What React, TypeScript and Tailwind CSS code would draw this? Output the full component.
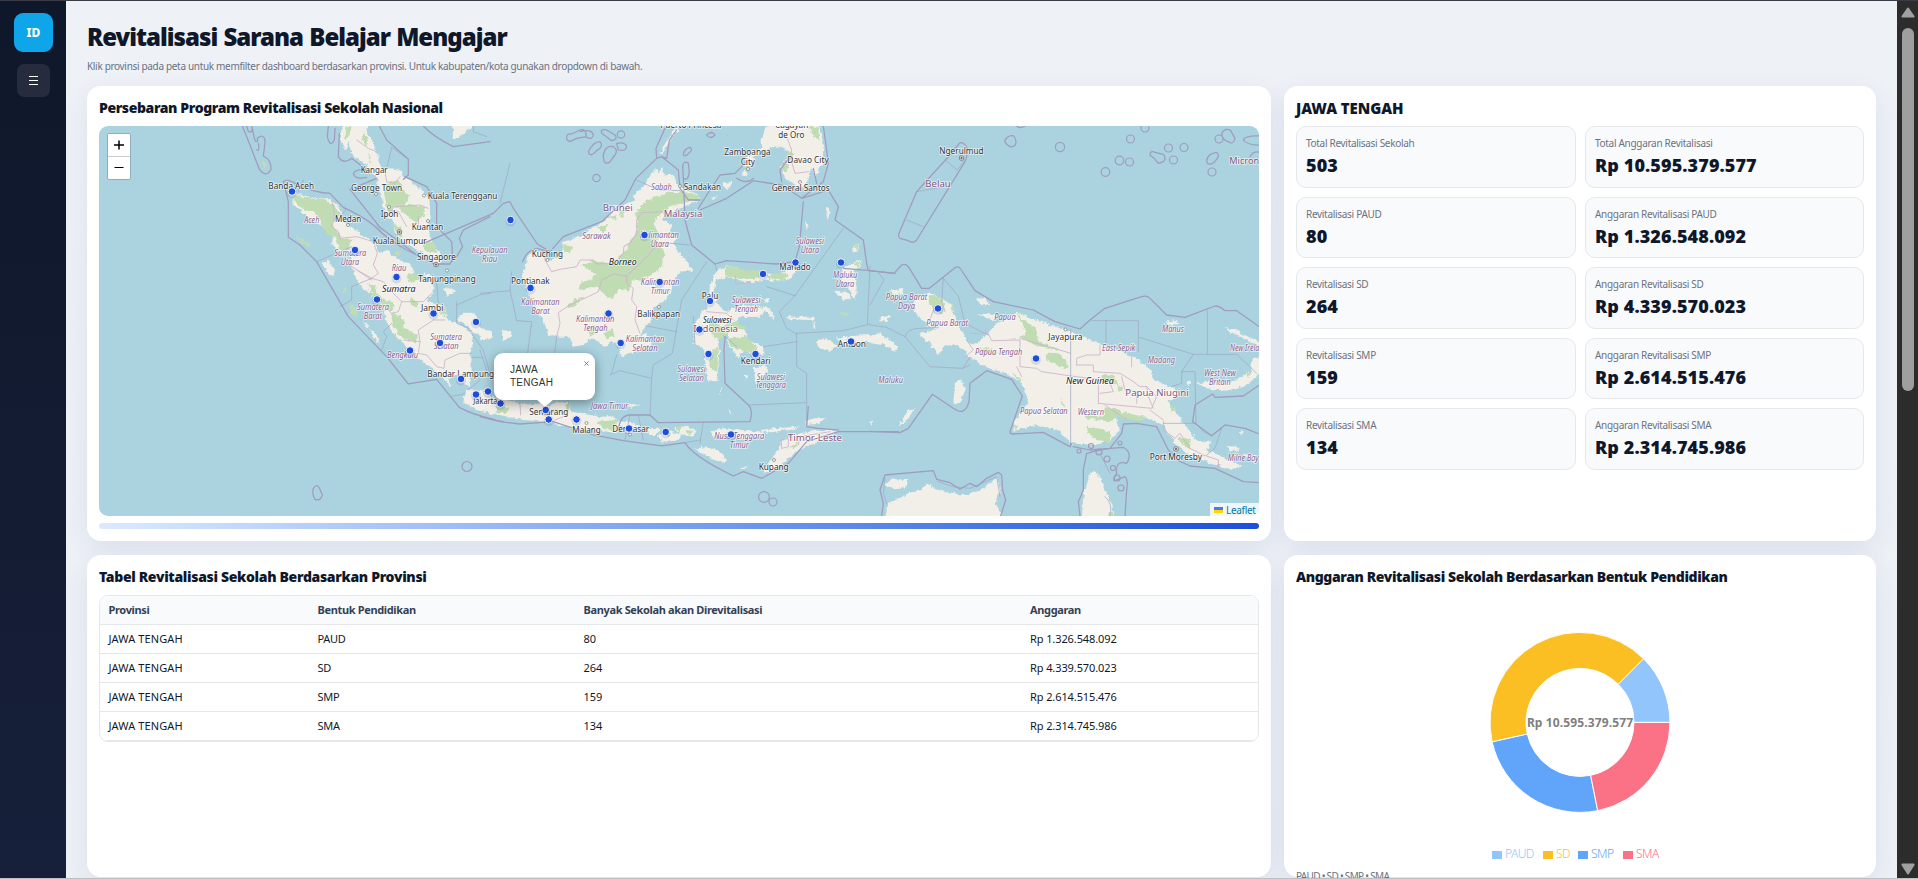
import React from "react";

type Label = [number, number, number, string];

const LAND_W = [
  "M755 10L752 60 765 92 775 65 785 100 808 120 830 135 845 160 862 172 862 195 875 225 880 260 895 290 908 300 915 340 940 365 965 382 1000 400 1040 432 1056 428 1050 395 1028 365 1015 340 1022 290 1018 240 1000 215 980 198 955 178 940 168 925 148 900 145 885 155 870 135 862 105 850 65 835 45 830 10Z",
  "M1090 10L1088 58 1110 48 1145 25 1150 10Z",
  "M602 216L625 222 680 235 715 235 740 255 755 272 760 305 790 325 820 348 855 370 865 398 890 392 915 410 940 425 965 438 970 460 1000 480 1035 498 1030 520 1010 540 1045 555 1068 560 1075 600 1105 610 1125 625 1145 640 1150 670 1140 690 1142 740 1140 800 1120 790 1100 765 1075 775 1082 802 1060 775 1035 752 1000 725 965 700 940 670 910 640 888 600 885 575 860 540 845 520 825 510 800 480 790 450 780 410 745 392 725 375 730 345 690 315 650 290 612 255Z",
  "M695 428L715 422 735 450 730 468 710 455Z",
  "M1100 600L1115 582 1150 578 1160 600 1165 622 1195 630 1185 652 1150 640 1135 618Z",
  "M818 600L835 618 830 622Z", "M840 625L860 645 866 668 848 650Z",
  "M1062 510L1075 500 1095 515 1070 530Z",
  "M1000 455L1015 465 1035 470 1030 478 1005 470Z",
];
const GREEN_W = [
  "M605 225L680 237 705 238 735 262 752 280 735 300 728 320 745 335 752 355 785 360 778 392 748 390 738 350 712 345 690 305 672 275 640 268 615 248Z",
  "M770 18L785 20 775 50 765 60Z", "M820 30L832 60 828 80 818 60Z", "M835 90L845 135 838 130Z",
  "M890 190L925 180 945 215 960 225 940 262 915 260 900 290 888 250 882 215Z",
  "M925 260L960 252 1005 262 1000 290 975 312 960 290 935 275Z",
  "M905 305L930 320 940 350 922 345Z", "M1000 365L1030 362 1045 400 1020 395 1002 385Z",
  "M620 350L660 372 658 380 628 362Z", "M775 550L798 560 805 592 782 578Z",
  "M835 490L860 495 858 515 880 540 908 545 912 570 895 570 870 545 845 520Z",
  "M905 580L935 590 945 625 980 645 978 668 955 660 930 650 905 610Z",
  "M955 460L985 462 990 480 965 488 950 475Z", "M960 535L985 548 985 565 962 552Z",
  "M1050 555L1068 562 1068 590 1048 580Z", "M760 505L770 500 762 530Z", "M950 770L968 778 955 778Z", "M518 120L530 135 525 148 515 138Z", "M915 395L930 395 930 408 917 405Z",
];
const LINES_W = [
  "M457 18L480 75 508 148Q530 175 543 148Q545 120 520 108Q525 75 525 60Q520 40 502 55Q505 70 495 62Q490 40 485 18",
  "M505 70Q510 95 500 90M485 30Q490 38 475 35L470 18",
  "M580 185Q592 175 615 190Q670 218 720 220L760 262Q820 290 850 315Q895 360 950 390Q1010 420 1035 432L1080 432Q1090 415 1085 365L1040 320 1040 250 1010 200 945 170",
  "M580 185L595 245 595 352 630 375 680 425 775 590 890 710 955 792 1040 778 1108 862Q1150 885 1210 897",
  "M868 18L890 60 955 118 955 165 940 178",
  "M715 18L712 50Q720 85 733 60L735 25M748 40L745 110Q760 135 785 115L830 150Q800 145 790 160Q795 180 830 172",
  "M780 208L870 322 940 375 1000 420M780 208L860 175",
  "M1200 290L1120 330 1108 355 1118 380 1100 410 1085 425",
  "M1000 18Q1030 50 1090 80L1200 65",
  "M1200 897L1240 905",
  "M670 1105Q682 1088 690 1108L697 1125Q692 1145 675 1138Q665 1125 670 1105Z",
];
const THIN_W = [
  "M905 82L890 145M905 82L955 118M640 180L625 215M770 265L755 285M680 425L785 380M750 560L785 540 785 500 845 475M875 690L890 650 880 635 905 610M860 315L880 345M1040 490L1045 555M1100 545L1100 610 1130 620 1180 690 1200 760M1100 555L1170 525 1200 520M1145 712L1180 712M1080 830L1120 822 1170 780M1150 18L1150 35 1190 50",
];
const PROV_W = [
  "M725 240L735 290 725 320 745 335 750 355 800 350 850 365 862 400 850 435 865 460 845 475 810 455 785 440M845 475L880 485 895 505 935 545 1000 545 1025 520M935 545L925 575 905 580 888 565M940 660L990 665 985 630 1030 600 1065 600M990 665L985 700 1010 705 1040 740 1062 745 1065 720 1110 700 1145 700M800 450L845 480M920 260L990 255 1015 265M885 155L890 185 915 190 930 170M800 60L835 85 860 95M895 270L925 275 950 320M985 290L985 320 1015 320",
];

const LAND_M = [
  "M545 140L555 165 580 165 590 190 615 210 650 222 660 240 635 250 605 262 580 275 555 285 545 300 578 315 568 335 590 350 578 370 600 400 640 450 600 455 580 480 575 510 550 545 520 560 515 600 495 618 480 650 500 640 515 675 490 690 450 700 425 712 415 680 395 665 375 680 350 662 330 655 310 675 280 680 270 650 240 650 205 645 190 600 165 570 150 530 130 480 130 450 150 400 180 395 200 425 245 410 250 365 300 350 340 320 380 300 400 260 430 255 465 240 460 225 490 200 515 160 530 145 540 160Z",
  "M540 105L545 88 562 60 590 15 605 15 572 58 548 100Z",
  "M845 60L860 20 930 10 1015 10 1030 70 1028 130 1008 170 998 150 988 155 985 185 965 205 915 175 900 140 930 100 905 80 885 80 850 92 822 110 815 135 790 140 800 110 845 82Z",
  "M790 155L808 158 800 172 785 165Z", "M730 190L758 185 750 200 735 205Z", "M690 235L715 225 700 240Z",
  "M682 560L690 500 705 460 740 435 790 450 840 460 890 462 930 450 945 430 952 448 925 480 860 482 800 487 740 472 708 480 700 520 712 552 740 575 790 552 835 560 855 572 840 590 780 592 762 605 795 635 805 660 850 680 850 705 810 700 790 690 775 720 760 690 745 675 742 640 725 620 712 650 718 700 712 780 682 782 678 740 668 680 640 672 642 620 662 580Z",
  "M820 745L850 735 865 750 830 795Z", "M790 765L802 765 798 780Z", "M720 790L724 830 720 815Z",
  "M840 560L870 565 885 600 860 575Z", "M840 535L870 535 865 550Z",
  "M918 588L950 590 1000 590 1003 600 925 598Z", "M1002 600L1006 625 1000 622Z",
  "M1115 430L1142 420 1138 445 1120 452 1130 500 1128 540 1112 520 1105 490 1085 480 1088 445Z", "M1120 378L1140 368 1135 390 1120 395Z", "M1060 515L1095 515 1115 535 1090 540Z", "M1038 262L1050 270 1042 305Z", "M975 305L985 315 980 325Z",
  "M1008 665L1040 655 1070 675 1050 692 1018 685Z", "M1070 655L1110 648 1170 645 1215 650 1215 672 1155 665 1120 680 1085 672Z",
  "M-45 810L20 812 45 838 90 845 120 850 160 856 185 848 200 862 230 848 265 845 275 875 330 885 370 890 400 888 418 915 412 940 350 930 280 925 200 905 130 900 60 885 0 872 -50 850Z",
  "M412 905L450 905 478 918 455 945 435 935Z", "M500 930L540 925 530 945 505 945Z", "M530 950L560 930 605 945 590 962 545 965Z",
  "M580 925L620 920 650 930 640 950 600 942Z", "M690 935L730 925 790 930 850 935 850 950 800 955 740 948 700 950Z",
  "M840 930L880 925 960 920 930 930 860 938Z", "M975 905L1000 895 1040 895 1010 912 980 915Z",
  "M645 985L690 982 725 1000 742 1025 710 1022 660 998Z",
  "M860 1045L885 1000 910 960 960 940 1020 930 1080 930 1050 950 980 980 940 1000 900 1040 850 1060Z",
  "M0 632L35 635 38 655 5 662Z", "M65 632L90 630 92 655 68 662Z", "M440 852L480 855 470 860 445 860Z", "M745 870L758 880 750 880Z", "M780 1042L800 1038 795 1045Z",
];
const GREEN_M = [
  "M470 280L480 262 500 242 560 218 605 215 655 225 655 240 610 248 575 258 545 278 520 310 535 340 530 370 555 395 545 440 520 462 480 482 462 478 445 512 420 505 395 537 370 520 350 500 300 512 298 490 335 478 350 462 300 435 340 422 400 432 440 390 440 372 470 340Z",
  "M285 535L312 530 280 562 262 560Z", "M370 640L395 625 405 650 380 655Z", "M325 620L345 615 350 640 330 650Z",
  "M385 290L410 288 405 300Z", "M350 320L385 315 370 340Z", "M250 372L280 378 270 400 250 390Z", "M412 270L440 270 425 292Z",
  "M735 435L775 445 845 458 830 475 790 478 735 470Z", "M745 655L800 650 830 680 820 700 780 690 748 675Z", "M870 460L925 460 915 480 870 475Z",
  "M690 600L725 620 770 600 800 630 760 630 715 660 690 640Z", "M685 700L715 680 712 760 690 740Z",
  "M1120 378L1140 370 1132 392Z", "M1120 430L1140 425 1135 445Z", "M1080 575L1112 580 1100 588 1078 584Z",
  "M985 20L1015 20 1018 60 1000 50Z", "M925 90L940 100 935 130 920 115Z", "M905 130L930 130 920 155 905 150Z",
  "M210 870L235 865 225 880Z", "M45 860L90 862 80 880 50 878Z", "M255 850L275 855 260 875Z", "M350 905L410 900 410 935 370 925Z", "M585 920L605 922 600 938Z", "M615 930L640 932 630 945Z", "M550 940L575 942 565 950Z", "M920 985L960 965 945 985Z",
];
const LINES_M = [
  "M-170 370L-30 310 40 280 70 250 90 245 100 265 172 372 210 395 250 350 365 305 435 240 468 175 530 115 545 110 595 150 600 205 625 240 660 240M530 115L528 85 555 25",
  "M545 110L560 115 568 60 590 30M610 170L615 300 635 375 705 432 740 422 890 432 945 425 958 380 970 245M660 270L740 235 820 182 905 195 965 235 1030 185 1045 130 1030 18",
  "M965 235L1045 210 1075 260 1065 300 1150 360 1160 430 1165 452 1245 460",
  "M655 265L690 210 720 165 765 160 800 125",
  "M0 890L60 905 120 912 220 905 340 945 430 962 545 978 615 968Q640 1010 760 1068L790 1055 845 1075 925 1030 980 965 1075 935 1170 935 1255 935",
  "M980 920L985 860 M980 920Q1000 925 1075 930M415 930Q420 885 450 885L510 885 535 908 810 905Q820 870 805 855L735 790 732 690 735 650",
  "M128 425Q140 390 172 385L200 395M260 55Q258 40 275 42L300 30Q320 25 318 50L290 55 270 65Q260 62 260 55ZM300 35Q335 25 340 45Q338 60 320 52M365 40Q360 25 380 30L405 45Q415 60 395 62ZM325 95Q340 65 360 65Q372 80 350 92Q330 115 325 95ZM370 105Q375 75 400 80Q415 90 405 105L390 125Q370 140 370 105ZM410 70Q435 65 440 80Q438 95 415 90ZM610 105Q612 85 630 82Q640 90 628 98Q615 112 610 105ZM608 140Q610 120 625 130L628 155Q625 185 610 175Z",
  "M770 175Q800 195 820 175M905 185L900 150 930 110M1000 145L1010 190M680 45Q695 30 705 45Q690 60 680 45",
];
const THIN_M = [
  "M60 250L90 130M0 520L90 512M0 690L20 750M95 455L90 510 110 602 155 605 135 760M230 650L215 770M265 845L230 770M410 705L395 760 390 765M390 765L420 752 515 775 510 885M515 775L520 735 577 700 605 540 680 425M470 180L535 210 600 212M500 618L590 635M575 370L628 375M640 590L645 672M705 432L710 450M735 650L770 680M850 680L950 665M950 640L950 740 980 760 980 920M950 640L1090 632 1170 612M945 527L898 575 920 625 950 642M945 527L1090 325M860 500L945 527M1170 440L1162 612M808 855L980 848M660 970L670 905M475 885L490 960M450 885L435 960M615 968L660 960",
];
const PROV_M = [
  "M195 420L215 455 240 448 290 440 300 420 340 420 350 432 400 430 430 400 432 378 450 370 470 340 470 300 485 278 545 275 560 290M355 515L325 530 270 555 235 578 240 610 230 650M355 515L365 480 400 462 440 468 440 490 460 505 455 540 470 560 465 600 480 640M440 468L480 430 510 400 535 370 575 370M680 575L740 580 760 600M765 470L768 492 808 488M860 462L870 478M905 130L935 125 945 160 985 155M920 50L935 90 930 120M120 850L122 885M265 850L262 885 225 900M200 865L215 900M905 960L925 955 925 980 905 985ZM955 975L960 950 1050 935",
];

const LAND_E = [
  "M60 510L95 508 105 520 75 525Z", "M30 590L60 588 50 605 28 600Z",
  "M132 540L165 522 185 520 225 542 245 555 255 590 268 625 285 650 295 670 320 670 355 638 380 610 440 578 500 600 560 622 610 640 690 672 740 690 790 710 840 745 850 780 900 800 935 820 895 845 915 872 945 915 985 965 1025 965 1010 990 1080 1020 1120 1040 1080 1048 1030 1030 960 1010 915 970 880 915 830 895 770 890 735 890 750 930 722 960 680 975 600 970 565 930 500 915 430 932 435 900 475 850 455 790 420 765 350 742 300 712 280 690 250 672 222 680 205 708 182 672 145 642 205 628 170 612 135 580Z",
  "M45 1195L55 1150 115 1120 155 1110 170 1090 200 1108 240 1120 290 1125 330 1112 382 1075 390 1115 375 1145 398 1195Z",
  "M45 1095L65 1078 115 1080 105 1105 70 1108Z",
  "M635 1195L640 1130 660 1060 680 1052 700 1098 725 1150 735 1195Z",
  "M978 790L1020 785 1050 790 1095 780 1140 755 1145 718 1175 712 1175 755 1130 795 1070 812 1010 805Z",
  "M-5 650L30 640 60 660 82 680 75 695 40 672 0 670Z", "M255 790L270 775 285 810 270 850 250 850Z", "M85 920L115 870 135 865 110 900Z",
  "M320 580L390 585 365 600Z", "M315 535L345 535 358 556 335 555Z", "M885 605L920 600 928 612 890 614Z",
  "M1062 625L1090 628 1175 670 1165 678 1090 640Z", "M1070 978L1100 980 1108 992 1080 992Z", "M950 780L965 785 955 795Z", "M1110 932L1122 935 1112 945Z", "M1115 1000L1165 1012 1150 1025Z", "M0 905L8 900 5 915Z",
];
const GREEN_E = [
  "M175 525L205 530 225 550 218 580 195 575 180 550Z", "M240 550L255 570 245 575Z",
  "M440 578L462 600 500 630 505 665 575 690 500 678 455 655 410 660 450 652 470 640 455 605Z",
  "M525 700L560 698 588 720 595 745 570 740 530 720Z", "M330 685L360 685 385 700 370 708 335 695Z", "M418 752L450 775 460 795 440 775Z",
  "M695 765L730 768 745 790 720 795 695 785Z", "M640 885L700 890 740 870 795 885 830 890 815 905 740 890 720 905 650 895Z",
  "M705 862L745 868 742 880 700 890Z", "M650 920L700 928 725 945 715 965 680 960 652 940Z", "M925 950L962 958 960 988 930 970Z", "M900 850L915 865 905 880Z", "M575 835L583 860 572 850Z",
  "M430 920L445 915 440 930Z", "M715 1175L730 1178 730 1195 715 1195Z", "M1125 755L1142 760 1135 775Z", "M740 790L760 810 745 815Z",
];
const LINES_E = [
  "M-80 445L0 452 72 460 95 435Q105 430 115 440L155 505 178 505 255 443Q265 437 272 447L315 512 370 545 490 570 555 605 630 627 660 600 705 565 815 530Q830 525 840 535L890 585 945 592 1035 558Q1050 558 1065 572L1100 572 1175 625",
  "M0 934L90 938 115 925 187 823 250 865Q285 890 297 845L300 790 350 752 425 778 457 828 420 935Q420 942 430 942L520 937 600 980 605 970",
  "M610 980L660 990 720 985 755 940 760 912 800 910 860 920 895 990 925 1022 960 1038 1035 1045 1120 1085 1175 1088",
  "M1175 945L1125 925 1065 915 1025 947 968 905 975 855 1028 822 1035 832 1120 828 1175 790",
  "M140 215L240 105 268 70Q280 62 292 85Q290 120 285 125L140 360Q130 372 115 362L90 355Q83 350 87 340Z",
  "M35 1188L40 1150 30 1110 45 1065 190 1052 200 1078 240 1088 270 1108 300 1090 320 1100 350 1075 385 1057 395 1065 398 1110 407 1140 392 1188",
  "M630 1188L625 1145 640 1110 640 1050 650 1000Q700 985 760 982Q790 1000 770 1030Q735 1020 740 1060Q725 1085 735 1082L765 1070Q775 1080 770 1110L765 1188",
  "M404 65Q410 45 430 47Q442 60 436 75Q420 90 404 65ZM840 105Q840 90 855 97L880 103Q890 115 880 125L865 130Q855 115 840 105ZM1010 120Q1015 100 1040 97Q1050 105 1040 118Q1025 138 1012 130ZM1055 40Q1065 22 1082 32L1095 55Q1090 75 1075 65Q1055 60 1055 40ZM1120 60Q1125 45 1175 48M1175 76Q1130 75 1120 60M1140 110Q1150 90 1175 98M440 18Q450 28 465 18",
];
const THIN_E = [
  "M225 120L262 150 285 118M140 215L225 200M110 300L160 320M220 475L215 545M220 475L265 528 285 610 355 645M0 555L42 480 25 458M0 615L50 622 105 650 180 740 278 745 300 712M105 650Q110 625 150 625L205 622M602 628L602 980M708 600L708 675M665 602L805 602 805 695M808 652L970 703 935 755 975 755 978 910 880 910M970 703L1100 703 1160 760M1012 570L1012 703M935 755L935 790 905 800M978 910L1000 935 1025 947 1055 925 1035 985 1010 1005M278 745L300 735M45 1075L40 1120 50 1150M205 1085L250 1100 300 1105 380 1070 390 1130M705 1130Q730 1150 720 1188M690 1000L720 1060",
];
const PROV_E = [
  "M300 640L355 642 365 662 450 660 450 740 500 745 515 755 602 768 685 778M450 655L602 700M620 735L620 715 650 705 690 705 690 675M620 735L670 735 670 755 750 760 790 785 810 800 830 800 860 830 845 865 685 850 685 778M345 640L350 620M290 660L310 690 280 715M180 600L195 555M215 545L225 575M440 740L455 770M705 855L770 900M755 770L765 810 800 815 800 850M830 800L835 830 850 865M880 905L880 930 915 955 930 940 960 985 1000 1005 1045 1020 1045 1045M690 820L730 815 720 790M840 870L880 900M785 710L785 740",
];

const CITY_W: Label[] = [
  [535, 672, 206, "Banda Aceh"], [812, 893, 160, "Kangar"], [783, 936, 213, "George Town"], [1013, 1222, 236, "Kuala Terengganu"], [872, 925, 292, "Ipoh"],
  [735, 814, 307, "Medan"], [965, 1060, 331, "Kuantan"], [848, 1010, 371, "Kuala Lumpur"], [981, 1098, 420, "Singapore"], [985, 1157, 485, "Tanjungpinang"],
  [993, 1060, 574, "Jambi"], [1012, 1212, 770, "Bandar Lampung"], [1150, 1222, 851, "Jakarta"],
];
const PROVN_W: Label[] = [
  [643, 688, 309, "Aceh"], [733, 829, 408, "Sumatera"], [752, 808, 435, "Utara"], [905, 949, 454, "Riau"], [801, 897, 570, "Sumatera"], [821, 876, 597, "Barat"],
  [1021, 1116, 660, "Sumatera"], [1031, 1106, 687, "Selatan"], [891, 984, 714, "Bengkulu"], [1145, 1253, 400, "Kepulauan"], [1176, 1222, 427, "Riau"],
];
const CITY_M: Label[] = [
  [541, 724, 25, "Puerto Princesa"], [885, 985, 25, "Cagayan"], [895, 973, 55, "de Oro"], [733, 872, 106, "Zamboanga"], [782, 825, 136, "City"], [922, 1046, 129, "Davao City"],
  [875, 1049, 213, "General Santos"], [611, 723, 209, "Sandakan"], [155, 249, 411, "Kuching"], [93, 209, 492, "Pontianak"], [472, 600, 591, "Balikpapan"],
  [898, 992, 451, "Manado"], [665, 715, 536, "Palu"], [782, 872, 731, "Kendari"], [1073, 1158, 680, "Ambon"], [148, 265, 886, "Semarang"], [277, 362, 938, "Malang"],
  [397, 507, 935, "Denpasar"], [836, 926, 1051, "Kupang"],
];
const PROVN_M: Label[] = [
  [514, 575, 209, "Sabah"], [307, 392, 356, "Sarawak"], [480, 597, 353, "Kalimantan"], [512, 567, 380, "Utara"], [947, 1032, 371, "Sulawesi"], [962, 1018, 398, "Utara"],
  [123, 239, 556, "Kalimantan"], [154, 209, 583, "Barat"], [482, 598, 496, "Kalimantan"], [512, 569, 523, "Timur"], [288, 403, 607, "Kalimantan"], [310, 383, 634, "Tengah"],
  [437, 553, 667, "Kalimantan"], [457, 533, 693, "Selatan"], [755, 841, 548, "Sulawesi"], [763, 834, 575, "Tengah"], [1059, 1132, 475, "Maluku"], [1067, 1123, 502, "Utara"],
  [592, 677, 756, "Sulawesi"], [597, 672, 783, "Selatan"], [830, 915, 779, "Sulawesi"], [827, 918, 805, "Tenggara"], [333, 445, 867, "Jawa Timur"], [703, 853, 958, "Nusa Tenggara"], [749, 806, 984, "Timur"],
];
const CITY_E: Label[] = [[208, 341, 101, "Ngerulmud"], [535, 637, 661, "Jayapura"], [839, 996, 1020, "Port Moresby"]];
const PROVN_E: Label[] = [
  [47, 172, 539, "Papua Barat"], [84, 135, 566, "Daya"], [169, 294, 619, "Papua Barat"], [373, 437, 599, "Papua"], [315, 457, 705, "Papua Tengah"], [25, 99, 790, "Maluku"],
  [450, 593, 883, "Papua Selatan"], [623, 702, 885, "Western"], [696, 796, 692, "East Sepik"], [833, 915, 729, "Madang"], [876, 942, 636, "Manus"], [1080, 1192, 692, "New Ireland"],
  [1002, 1098, 767, "West New"], [1017, 1082, 794, "Britain"], [1073, 1166, 1022, "Milne Bay"],
];

function Names({ items, kind }: { items: Label[]; kind: "city" | "prov" | "country" | "island" }) {
  const tone = {
    city: "fill-[#333333] text-[26px]",
    prov: "fill-[#8a5f8e] text-[24.5px] italic",
    country: "fill-[#81567f] text-[28px]",
    island: "fill-[#222222] text-[26px] italic",
  }[kind];
  return (
    <g className={tone} stroke="#ffffff" strokeOpacity="0.7" strokeWidth="5" strokeLinejoin="round" paintOrder="stroke">
      {items.map(([x1, x2, y, t], i) => (
        <text key={i} x={x1} y={y} textLength={x2 - x1} lengthAdjust="spacingAndGlyphs">{t}</text>
      ))}
    </g>
  );
}

function Region({ x, y, land, green, prov, thin, lines }: { x: number; y: number; land: string[]; green: string[]; prov: string[]; thin: string[]; lines: string[] }) {
  return (
    <g transform={`translate(${x} ${y}) scale(.33333)`} strokeLinejoin="round" strokeLinecap="round">
      <path d={land.join("")} fill="#f2efe9" filter="url(#coast)" />
      <path d={green.join("")} fill="#c0dcb2" filter="url(#coast)" />
      <path d={prov.join("")} fill="none" stroke="#cdb3cb" strokeWidth="2.6" />
      <path d={thin.join("")} fill="none" stroke="#9fa9c4" strokeWidth="2.2" />
      <path d={lines.join("")} fill="none" stroke="#a09cbd" strokeWidth="3.8" />
    </g>
  );
}

const MARKERS: [number, number][] = [
  [193, 65.5], [256, 124], [297.5, 151], [278, 173.5], [334.5, 187.5], [377, 196], [341, 217], [311, 224.5], [362, 253], [377, 268.5], [389, 265.5], [401.5, 277.5],
  [411.5, 94], [545.5, 109], [431.5, 162], [560.7, 156], [509.5, 187.5], [521.7, 217], [696.5, 136.5], [742, 136.5], [664, 148], [611, 175], [600.5, 203.5],
  [609.5, 228], [656.5, 228], [752, 215.5], [446.7, 284], [449.7, 293.5], [477.5, 293.5], [530, 302.5], [566.7, 306], [632, 308.5], [839, 182.5], [937, 232.5],
];
const ATOLLS: [number, number, number][] = [
  [961, 21, 4.6], [1031.5, 13, 4], [1046, 2, 4], [1069.5, 22, 4], [1085, 21.5, 4], [1074.5, 34, 4], [1020.5, 34.5, 4.3], [1030.5, 36, 4], [1006.5, 46, 4.3], [1113, 46, 4],
  [1120, 13, 4], [368, 340.5, 5], [497.5, 52, 3.7], [522, 8.5, 3.7], [665, 371, 5.4], [674, 376, 4], [980, 325, 2], [992, 320, 2.5], [1021, 317, 2], [1014, 342, 2.5], [1018, 352, 3], [1022, 362, 3], [1008, 333, 3], [1000, 326, 3],
];

function MapCanvas() {
  return (
    <svg viewBox="0 0 1160 390" className="block h-[390px] w-[1160px] bg-[#aad3df] font-['Noto_Sans',sans-serif]">
      <defs>
        <filter id="coast" x="-5%" y="-5%" width="110%" height="110%">
          <feTurbulence type="fractalNoise" baseFrequency="0.08" numOctaves="3" seed="4" result="n" />
          <feDisplacementMap in="SourceGraphic" in2="n" scale="15" xChannelSelector="R" yChannelSelector="G" />
        </filter>
      </defs>
      <Region x={-9} y={-6} land={LAND_W} green={GREEN_W} prov={PROV_W} thin={THIN_W} lines={LINES_W} />
      <Region x={381} y={-6} land={LAND_M} green={GREEN_M} prov={PROV_M} thin={THIN_M} lines={LINES_M} />
      <Region x={771} y={-6} land={LAND_E} green={GREEN_E} prov={PROV_E} thin={THIN_E} lines={LINES_E} />
      <g fill="none" stroke="#a09cbd" strokeWidth="1.2">
        {ATOLLS.map(([x, y, r], i) => <circle key={i} cx={x} cy={y} r={r} />)}
      </g>
      <g fill="#fff" stroke="#777" strokeWidth=".7">
        {[[277, 68], [249, 99], [325, 69.5], [290, 81], [329, 95], [300.5, 106], [337, 138.5], [348, 144.5], [448.5, 134], [581, 60], [560, 181], [675, 334], [531, 308.5], [487.5, 297], [701, 56], [649, 43], [966.5, 203.5]].map(([x, y], i) => <circle key={i} cx={x} cy={y} r="1.5" />)}
        {[[300.5, 106], [337, 138.5], [862.5, 32], [1077, 323]].map(([x, y], i) => <g key={i} stroke="#555"><circle cx={x} cy={y} r="2.3" /><circle cx={x} cy={y} r=".8" fill="#444" /></g>)}
      </g>
      <g transform="translate(-9 -6) scale(.33333)">
        <Names items={PROVN_W} kind="prov" />
        <Names items={CITY_W} kind="city" />
        <Names items={[[876, 977, 516, "Sumatra"]]} kind="island" />
      </g>
      <g transform="translate(381 -6) scale(.33333)">
        <Names items={PROVN_M} kind="prov" />
        <Names items={[[368, 458, 272, "Brunei"], [551, 667, 292, "Malaysia"], [640, 774, 637, "Indonesia"], [924, 1086, 964, "Timor-Leste"]]} kind="country" />
        <Names items={CITY_M} kind="city" />
        <Names items={[[386, 470, 434, "Borneo"], [669, 754, 610, "Sulawesi"]]} kind="island" />
      </g>
      <g transform="translate(771 -6) scale(.33333)">
        <Names items={PROVN_E} kind="prov" />
        <Names items={[[166, 242, 201, "Belau"], [766, 956, 828, "Papua Niugini"], [1078, 1218, 131, "Micronesia"]]} kind="country" />
        <Names items={CITY_E} kind="city" />
        <Names items={[[588, 732, 793, "New Guinea"]]} kind="island" />
      </g>
      {MARKERS.map(([x, y], i) => (
        <g key={i}>
          <circle cx={x} cy={y + 1.4} r="5" fill="#1e3a8a" opacity=".13" />
          <circle cx={x} cy={y} r="3.8" fill="#1d4ed8" stroke="#f3f4f8" strokeWidth="1" />
        </g>
      ))}
    </svg>
  );
}

function Card({ title, titleClass, children }: { title: string; titleClass: string; children: React.ReactNode }) {
  return (
    <section className="flex min-w-0 flex-col rounded-[14px] bg-white p-3 shadow-[0_8px_26px_rgba(40,70,150,0.09)]">
      <h2 className={`mb-2 h-5 leading-5 font-black whitespace-nowrap ${titleClass}`}>{title}</h2>
      {children}
    </section>
  );
}

const KPIS = [
  ["Total Revitalisasi Sekolah", "503"], ["Total Anggaran Revitalisasi", "Rp 10.595.379.577"],
  ["Revitalisasi PAUD", "80"], ["Anggaran Revitalisasi PAUD", "Rp 1.326.548.092"],
  ["Revitalisasi SD", "264"], ["Anggaran Revitalisasi SD", "Rp 4.339.570.023"],
  ["Revitalisasi SMP", "159"], ["Anggaran Revitalisasi SMP", "Rp 2.614.515.476"],
  ["Revitalisasi SMA", "134"], ["Anggaran Revitalisasi SMA", "Rp 2.314.745.986"],
];
const ROWS = [["PAUD", "80", "Rp 1.326.548.092"], ["SD", "264", "Rp 4.339.570.023"], ["SMP", "159", "Rp 2.614.515.476"], ["SMA", "134", "Rp 2.314.745.986"]];
const GRID = "grid grid-cols-[209px_266px_446.5px_1fr] items-center pl-[8.5px]";

const SLICES = [
  { label: "PAUD", value: 1326548092, color: "#93c5fd" },
  { label: "SD", value: 4339570023, color: "#fbbf24" },
  { label: "SMP", value: 2614515476, color: "#60a5fa" },
  { label: "SMA", value: 2314745986, color: "#fb7185" },
];

function Donut() {
  const total = SLICES.reduce((a, s) => a + s.value, 0);
  let a = 0;
  const p = (r: number, t: number) => `${92 + r * Math.cos(t)} ${92.4 - r * Math.sin(t)}`;
  return (
    <svg viewBox="0 0 184 184" className="block h-[184px] w-[184px]">
      {SLICES.map((s) => {
        const b = a + (s.value / total) * Math.PI * 2;
        const d = `M${p(90, a)}A90 90 0 0 0 ${p(90, b)}L${p(54, b)}A54 54 0 0 1 ${p(54, a)}Z`;
        a = b;
        return <path key={s.label} d={d} fill={s.color} stroke="#fff" strokeWidth="1" />;
      })}
    </svg>
  );
}

function Swatch({ label, gap, box, text }: { label: string; gap: string; box: string; text: string }) {
  return (
    <div className={`flex items-center ${gap}`}>
      <span className={`mt-[2px] mr-[3px] h-2 w-[10px] ${box}`} />
      <span className={`text-[12px] leading-4 font-light tracking-[-0.55px] ${text}`}>{label}</span>
    </div>
  );
}

export default function App() {
  return (
    <div className="flex h-[879px] w-[1918px] flex-col overflow-hidden border-t border-b border-t-[#3a3b47] border-b-[#bdbfc2] bg-[#eef1f6] font-['Noto_Sans',sans-serif] text-[#0f172a]">
      <div className="flex min-h-0 flex-1">
        <aside className="flex w-[66px] shrink-0 flex-col items-center bg-linear-to-b from-[#0f172a] to-[#17203a] pt-3 pl-[1px]">
          <div className="flex h-[39px] w-[39px] items-center justify-center rounded-[9px] bg-[#0ea5e9] text-[12px] font-extrabold text-white">ID</div>
          <button className="mt-3 flex h-[33px] w-[33px] items-center justify-center rounded-[7px] bg-[#262c3d]">
            <svg viewBox="0 0 9 9" className="h-[9px] w-[9px]" shapeRendering="crispEdges">
              <path d="M0 .5H9M0 4.5H9M0 8.5H9" stroke="#fff" strokeWidth="1" />
            </svg>
          </button>
        </aside>

        <main className="flex h-[877px] w-[1831px] shrink-0 flex-col overflow-hidden bg-linear-to-b from-[#eef1f6] to-[#edf0f5] pt-[19px] pr-[21px] pl-[21px]">
          <h1 className="h-8 text-[24px] leading-[33px] font-black tracking-[-1px] [word-spacing:1px] whitespace-nowrap">Revitalisasi Sarana Belajar Mengajar</h1>
          <p className="mt-[6px] h-4 text-[10px] leading-4 tracking-[-0.325px] whitespace-nowrap text-[#6b7280]">Klik provinsi pada peta untuk memfilter dashboard berdasarkan provinsi. Untuk kabupaten/kota gunakan dropdown di bawah.</p>

          <div className="mt-3 grid grid-cols-[1184px_592px] grid-rows-[455px_322px] gap-x-[13px] gap-y-[14px]">
            <Card title="Persebaran Program Revitalisasi Sekolah Nasional" titleClass="text-[14px] tracking-[-0.4px]">
              <div className="relative h-[390px] w-[1160px] shrink-0 overflow-hidden rounded-[9px]">
                <MapCanvas />
                <div className="absolute top-[7px] left-2 flex w-[24px] flex-col rounded-[2px] border border-[#8fb0bb] bg-white text-black">
                  <button className="flex h-[23px] items-center justify-center border-b border-[#cccccc]">
                    <svg viewBox="0 0 10 10" className="h-[10px] w-[10px]"><path d="M0 5H10M5 0.5V9.5" stroke="#000" strokeWidth="1.5" /></svg>
                  </button>
                  <button className="flex h-[22px] items-center justify-center">
                    <svg viewBox="0 0 10 10" className="h-[10px] w-[10px]"><path d="M0.5 4.5H9.5" stroke="#000" strokeWidth="1.2" /></svg>
                  </button>
                </div>
                <div className="absolute top-[227px] left-[395px] h-[47px] w-[101px] rounded-[9px] bg-white pt-[10px] pl-[16px] font-['Liberation_Sans',sans-serif] text-[10px] leading-[13px] tracking-[0.25px] text-[#333333] shadow-[0_3px_12px_rgba(0,0,0,0.4)]">
                  JAWA<br />TENGAH
                  <svg viewBox="0 0 6 6" className="absolute top-[8px] right-[6px] h-[5px] w-[5px]"><path d="M.5 .5L5.5 5.5M5.5 .5L.5 5.5" stroke="#757575" strokeWidth="1" /></svg>
                  <svg viewBox="0 0 18 8" className="absolute top-[46px] left-[42px] h-2 w-[18px]"><path d="M0 0H18L10.5 6.5Q9 8 7.5 6.5Z" fill="#fff" /></svg>
                </div>
                <div className="absolute right-0 bottom-0 flex h-[13px] w-[49px] items-center bg-white/80 pl-1 text-[10px] leading-3 tracking-[-0.6px] text-[#0078a8]">
                  <svg viewBox="0 0 9 6" className="mr-[3px] h-[6px] w-[9px] shrink-0"><path d="M0 0H9V3H0Z" fill="#4c7be1" /><path d="M0 3H9V6H0Z" fill="#ffd500" /></svg>
                  <span className="tracking-[-0.3px]">Leaflet</span>
                </div>
              </div>
              <div className="mt-[7px] h-[6px] w-[1160px] shrink-0 rounded-full bg-linear-to-r from-[#dbeafe] to-[#1d4ed8]" />
            </Card>

            <Card title="JAWA TENGAH" titleClass="text-[15px] tracking-[-0.1px]">
              <div className="grid grid-cols-[280px_279px] gap-x-[9px] gap-y-[9px]">
                {KPIS.map(([label, value]) => (
                  <div key={label} className="h-[61.5px] rounded-[10px] border border-[#e5e7eb] bg-[#f9fafc] px-[9px] pt-[9px]">
                    <div className="text-[10px] leading-[14px] tracking-[-0.3px] whitespace-nowrap text-[#6b7280]">{label}</div>
                    <div className="mt-1 text-[18px] leading-[22px] font-black tracking-[0.1px] whitespace-nowrap">{value}</div>
                  </div>
                ))}
              </div>
            </Card>

            <Card title="Tabel Revitalisasi Sekolah Berdasarkan Provinsi" titleClass="text-[14px] tracking-[-0.33px]">
              <div className="w-[1160px] overflow-hidden rounded-[9px] border border-[#e5e7eb] text-[11px] leading-4 whitespace-nowrap">
                <div className={`${GRID} h-[29px] border-b border-[#e5e7eb] bg-[#f9fafc] font-bold tracking-[-0.35px] text-[#334155]`}>
                  <span>Provinsi</span><span>Bentuk Pendidikan</span><span>Banyak Sekolah akan Direvitalisasi</span><span>Anggaran</span>
                </div>
                {ROWS.map(([b, n, v]) => (
                  <div key={b} className={`${GRID} h-[29px] border-b border-[#e5e7eb]`}>
                    <span className="tracking-[0.1px]">JAWA TENGAH</span><span className="tracking-[-0.3px]">{b}</span><span className="tracking-[-0.1px]">{n}</span><span className="tracking-[-0.1px]">{v}</span>
                  </div>
                ))}
              </div>
            </Card>

            <Card title="Anggaran Revitalisasi Sekolah Berdasarkan Bentuk Pendidikan" titleClass="text-[14px] tracking-[-0.4px]">
              <div className="flex h-[277px] shrink-0 flex-col items-center pt-[35px]">
                <div className="grid h-[184px] w-[184px] place-items-center">
                  <div className="col-start-1 row-start-1"><Donut /></div>
                  <div className="col-start-1 row-start-1 mt-px text-[12px] leading-4 font-bold tracking-[0.12px] whitespace-nowrap text-[#808080]">Rp 10.595.379.577</div>
                </div>
                <div className="mt-[32px] flex h-4 w-[176px]">
                  <Swatch label="PAUD" gap="w-[51px]" box="bg-[#93c5fd]" text="text-[#93c5fd]" />
                  <Swatch label="SD" gap="w-[35px]" box="bg-[#fbbf24]" text="text-[#fbbf24]" />
                  <Swatch label="SMP" gap="w-[45px]" box="bg-[#60a5fa]" text="text-[#60a5fa]" />
                  <Swatch label="SMA" gap="w-[45px]" box="bg-[#fb7185]" text="text-[#fb7185]" />
                </div>
              </div>
              <p className="-mt-[4px] text-[10px] leading-4 tracking-[-0.7px] whitespace-nowrap text-[#6b7280]">PAUD • SD • SMP • SMA</p>
            </Card>
          </div>
        </main>

        <div className="flex w-[21px] shrink-0 flex-col items-center bg-[#2c2c2c] pt-[6px] pb-[3px]">
          <svg viewBox="0 0 14 11" className="h-[11px] w-[14px]"><path d="M7 1.5L12.6 9.6H1.4Z" fill="#a0a0a0" stroke="#a0a0a0" strokeWidth="2" strokeLinejoin="round" /></svg>
          <div className="mt-[10px] h-[363px] w-3 rounded-full bg-[#9f9f9f]" />
          <svg viewBox="0 0 14 12" className="mt-auto h-[12px] w-[14px]"><path d="M7 10.4L12.6 1.6H1.4Z" fill="#a0a0a0" stroke="#a0a0a0" strokeWidth="2" strokeLinejoin="round" /></svg>
        </div>
      </div>
    </div>
  );
}
